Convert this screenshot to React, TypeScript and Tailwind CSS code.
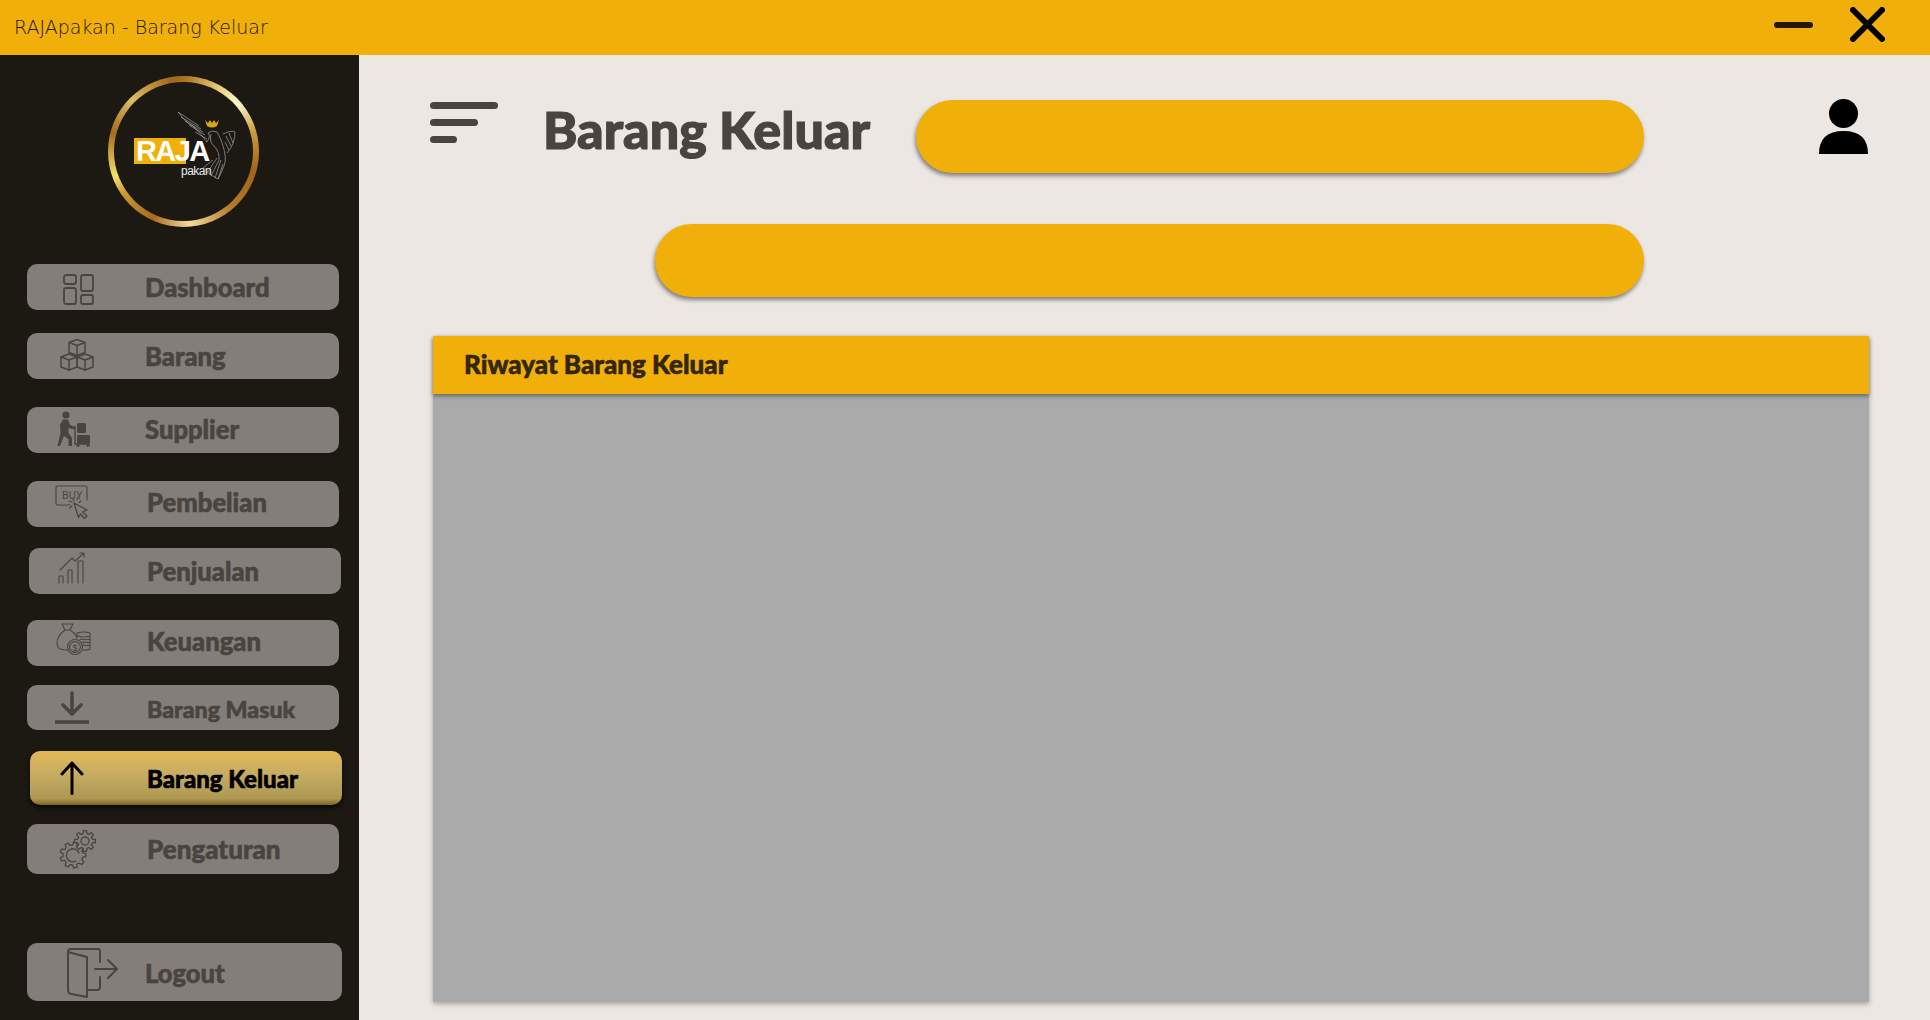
import React from "react";

const gear = (cx: number, cy: number, r: number, teeth: number) => {
  const tip = r + 3;
  let d = "";
  for (let i = 0; i < teeth; i++) {
    const step = (Math.PI * 2) / teeth;
    const a = i * step;
    const pts = [
      [r, a - step * 0.32],
      [tip, a - step * 0.18],
      [tip, a + step * 0.18],
      [r, a + step * 0.32],
    ];
    pts.forEach(([rad, ang], j) => {
      const x = (cx + rad * Math.cos(ang)).toFixed(1);
      const y = (cy + rad * Math.sin(ang)).toFixed(1);
      d += `${i === 0 && j === 0 ? "M" : "L"}${x} ${y}`;
    });
  }
  return d + "Z";
};

const line = { fill: "none", stroke: "#4a4440", strokeLinecap: "round", strokeLinejoin: "round" } as const;

const DashboardIcon = () => (
  <svg width="31" height="31" viewBox="0 0 31 31" {...line} strokeWidth="1.8">
    <rect x="1" y="1" width="12" height="9" rx="2" />
    <rect x="18" y="1" width="12" height="16" rx="2" />
    <rect x="1" y="14" width="12" height="16" rx="2" />
    <rect x="18" y="21" width="12" height="9" rx="2" />
  </svg>
);

const Cube = ({ x, y }: { x: number; y: number }) => (
  <g transform={`translate(${x} ${y})`}>
    <path d="M8 0 L16 3 V13 L8 16 L0 13 V3 Z" />
    <path d="M0 3 L8 6 L16 3 M8 6 V16" />
  </g>
);

const BoxesIcon = () => (
  <svg width="34" height="32" viewBox="0 0 34 32" {...line} strokeWidth="1.5">
    <Cube x={9} y={0.5} />
    <Cube x={1} y={15} />
    <Cube x={17} y={15} />
  </svg>
);

const SupplierIcon = () => (
  <svg width="34" height="36" viewBox="0 0 34 36" fill="#4a4440">
    <circle cx="9" cy="4" r="3.6" />
    <path d="M6 8.5 H11 L13 14 L18 16 V18.5 L11.5 17 V22 L15 27 V35 H11.5 V28.5 L7 25 L3 35 H0.5 L3.5 22 L3 14 Z" />
    <path d="M18 15 V33 H33" fill="none" stroke="#4a4440" strokeWidth="1.4" />
    <rect x="20" y="12" width="9" height="10" rx="1.5" />
    <rect x="20" y="24" width="13" height="9" rx="1" />
    <circle cx="21" cy="34.5" r="1.5" />
    <circle cx="31" cy="34.5" r="1.5" />
  </svg>
);

const BuyIcon = () => (
  <svg width="34" height="34" viewBox="0 0 34 34" {...line} strokeWidth="1.1">
    <path d="M15 20 H2.5 Q1 20 1 18.5 V2.5 Q1 1 2.5 1 H30 Q32 1 32 2.5 V15" />
    <text x="7" y="14" fill="#4a4440" stroke="none" fontSize="10" fontFamily="'Liberation Sans', sans-serif">BUY</text>
    <path d="M19 18 L32 25 L27.5 27 L32 31 L29.5 33.5 L25.5 29 L23.5 32.5 Z" strokeWidth="1.3" />
    <path d="M18 13 L19 16 M23 12 L22 15 M14 16 L17 17 M14.5 23 L17 21 M26 16 L24 17.5" />
  </svg>
);

const SalesIcon = () => (
  <svg width="28" height="32" viewBox="0 0 28 32" {...line} strokeWidth="1.1">
    <path d="M1 31 V25 Q1 24 2 24 H5 V31 M10 31 V18 H14 V31 M20 31 V9 H25 V31" />
    <path d="M2 18 L14 6 L17 9 L26 1 M22 1 H26 V5" />
  </svg>
);

const MoneyIcon = () => (
  <svg width="35" height="33" viewBox="0 0 35 33" {...line} strokeWidth="1.1">
    <path d="M6 1 H17 L14 7 H9 Z M9 7 Q1 13 1 20 Q1 27 9 27 H13 M14 7 Q19 10 21 15" />
    <circle cx="19" cy="24" r="7.5" />
    <circle cx="19" cy="24" r="5.4" />
    <text x="16.5" y="27.5" fill="#4a4440" stroke="none" fontSize="9" fontFamily="'Liberation Sans', sans-serif">$</text>
    <path d="M21 10 Q28 8 34 10 V26 Q31 27.5 27 27 M21 10 V14 M22 13 Q28 15 34 13 M24 16 Q29 17.5 34 16 M26 19 Q30 20 34 19 M27 22 Q31 23 34 22" />
  </svg>
);

const DownIcon = () => (
  <svg width="34" height="33" viewBox="0 0 34 33" fill="none" stroke="#4a4440" strokeWidth="3.6">
    <path d="M17 2 V22" strokeLinecap="round" />
    <path d="M8 14 L17 23 L26 14" strokeLinecap="round" strokeLinejoin="round" />
    <path d="M0 31 H34" />
  </svg>
);

const UpIcon = () => (
  <svg width="24" height="34" viewBox="0 0 24 34" fill="none" stroke="#000" strokeWidth="3" strokeLinecap="round" strokeLinejoin="round">
    <path d="M12 32.5 V2 M2 13 L12 2 L22 13" />
  </svg>
);

const GearsIcon = () => (
  <svg width="38" height="39" viewBox="0 0 38 39" {...line} strokeWidth="1.3">
    <path d={gear(14, 25, 10, 9)} />
    <path d="M20 23 A6.5 6.5 0 1 0 17 31" />
    <path d={gear(26, 11, 7.5, 8)} fill="#837e79" />
    <circle cx="26" cy="11" r="4" />
  </svg>
);

const DoorIcon = () => (
  <svg width="52" height="50" viewBox="0 0 52 50" {...line} strokeWidth="2">
    <path d="M1 4 L20 9 V49 L4 46 Q1 45 1 42 V4 Q1 1 4 1 H31 Q33 1 33 3 V14 M33 29 V39 Q33 42 30 42 H20" />
    <path d="M28 21 H50 M41 12 L50 21 L41 30" />
  </svg>
);

const items = [
  { label: "Dashboard", box: "mt-[37px] ml-[27px] h-[46px]", iconBox: "w-[118px] pl-[36px] pt-[10px]", text: "text-[25.6px] mt-[2px]", Icon: DashboardIcon },
  { label: "Barang", box: "mt-[23px] ml-[27px] h-[46px]", iconBox: "w-[118px] pl-[33px] pt-[6px]", text: "text-[25.6px] mt-[2px]", Icon: BoxesIcon },
  { label: "Supplier", box: "mt-[28px] ml-[27px] h-[46px]", iconBox: "w-[118px] pl-[30px] pt-[4px]", text: "text-[25.6px]", Icon: SupplierIcon },
  { label: "Pembelian", box: "mt-[28px] ml-[27px] h-[46px]", iconBox: "w-[120px] pl-[28px] pt-[4px]", text: "text-[25.6px] mb-[2px]", Icon: BuyIcon },
  { label: "Penjualan", box: "mt-[21px] ml-[29px] h-[46px]", iconBox: "w-[118px] pl-[29px] pt-[4px]", text: "text-[25.6px] mt-[2px]", Icon: SalesIcon },
  { label: "Keuangan", box: "mt-[26px] ml-[27px] h-[46px]", iconBox: "w-[120px] pl-[29px] pt-[3px]", text: "text-[25.6px] mb-[2px]", Icon: MoneyIcon },
  { label: "Barang Masuk", box: "mt-[19px] ml-[27px] h-[45px]", iconBox: "w-[120px] pl-[28px] pt-[6px]", text: "text-[23.2px] mt-[4px]", Icon: DownIcon },
];

const NavButton = ({ label, box, iconBox, text, Icon }: (typeof items)[number]) => (
  <div className={`${box} w-[312px] flex rounded-[10px] bg-[#837e79]`}>
    <div className={`${iconBox} shrink-0`}>
      <Icon />
    </div>
    <span className={`${text} self-center font-black leading-none text-[#4a4440] [-webkit-text-stroke:0.6px]`}>{label}</span>
  </div>
);

const Logo = () => (
  <div className="relative mt-[21px] ml-[108px] h-[151px] w-[151px] rounded-full bg-[conic-gradient(#a86f1f_0deg,#e9cf78_30deg,#fff8cf_48deg,#c99a3c_75deg,#a2631a_105deg,#b57a28_140deg,#f2dc98_175deg,#a86a1c_205deg,#c89a35_235deg,#f2e36a_250deg,#a66c1e_285deg,#dcbd62_315deg,#a2681c_350deg,#a86f1f_360deg)] p-[6px]">
    <div className="h-full w-full rounded-full bg-[#1c1913]" />
    <div className="absolute left-[26px] top-[62px] h-[26px] w-[52px] bg-[#f1b009]" />
    <span className="absolute left-[28px] top-[60px] font-['Liberation_Sans',sans-serif] text-[29px] leading-[30px] font-bold tracking-[-1.6px] text-white">RAJA</span>
    <span className="absolute left-[73px] top-[88px] font-['Liberation_Sans',sans-serif] text-[12px] leading-[14px] tracking-[-0.5px] text-[#e8e8e8]">pakan</span>
    <svg className="absolute left-0 top-0" width="151" height="151" viewBox="1 0 151 151" fill="none" stroke="#b9b9b9" strokeWidth="0.6">
      <path d="M71 36 Q80 48 86 50 Q94 58 100 66 Q104 60 101 57 L105 55 L110 56 Q114 62 116 70 Q120 82 117 90 Q114 98 111 103 L104 99 L96 92" />
      <path d="M71 36 L92 50 M74 41 L94 53 M78 45 L96 56 M82 49 L98 59 M88 56 L100 63" />
      <path d="M116 58 Q124 54 128 56 Q128 68 120 77 M119 60 L124 70 M122 57 L126 67 M118 66 L122 74" />
      <path d="M96 92 L106 84 M100 97 L110 82 M104 100 L112 84 M108 102 L114 84 M111 103 L116 88" />
      <path d="M104 58 Q102 66 107 70 Q113 76 112 84" />
    </svg>
    <svg className="absolute left-[96px] top-[43px]" width="16" height="10" viewBox="0 0 16 10" fill="#d9a60f">
      <path d="M1 1 L4 4 L6 1 L8 4 L10 1 L12 4 L15 1 L13 7 Q8 10 3 7 Z" />
    </svg>
  </div>
);

export default function App() {
  return (
    <div className="flex h-screen flex-col overflow-hidden font-['Lato',sans-serif]">
      <header className="flex h-[55px] shrink-0 items-center justify-between bg-[#f1b009] pl-[14px] pr-[45px]">
        <span className="font-['DejaVu_Sans',sans-serif] text-[19px] font-extralight text-[#1f1700]">RAJApakan - Barang Keluar</span>
        <div className="flex items-center gap-[37px]">
          <div className="-mt-[6px] h-[6px] w-[39px] rounded-full bg-[#221a05]" />
          <svg className="-mt-[6px]" width="35" height="35" viewBox="0 0 35 35" stroke="#000" strokeWidth="6" strokeLinecap="round">
            <path d="M3 3 L32 32 M32 3 L3 32" />
          </svg>
        </div>
      </header>

      <div className="flex min-h-0 flex-1">
        <aside className="flex w-[359px] shrink-0 flex-col bg-[#1c1913]">
          <Logo />
          {items.map((item) => (
            <NavButton key={item.label} {...item} />
          ))}

          <div className="mt-[21px] ml-[30px] flex h-[54px] w-[312px] rounded-[10px] bg-[linear-gradient(#e3b855_0%,#c8ad63_40%,#ae9852_88%,#7d6424_100%)] shadow-[0_3px_5px_rgba(0,0,0,0.7)]">
            <div className="w-[117px] shrink-0 pl-[30px] pt-[10px]">
              <UpIcon />
            </div>
            <span className="mt-[2px] self-center text-[24px] font-black leading-none text-black [-webkit-text-stroke:0.6px]">Barang Keluar</span>
          </div>

          <div className="mt-[19px] ml-[27px] flex h-[50px] w-[312px] rounded-[10px] bg-[#837e79]">
            <div className="w-[120px] shrink-0 pl-[32px] pt-[6px]">
              <GearsIcon />
            </div>
            <span className="self-center text-[26px] font-black leading-none text-[#4a4440] [-webkit-text-stroke:0.6px]">Pengaturan</span>
          </div>

          <div className="mt-[69px] ml-[27px] flex h-[58px] w-[315px] rounded-[10px] bg-[#837e79]">
            <div className="w-[118px] shrink-0 pl-[40px] pt-[5px]">
              <DoorIcon />
            </div>
            <span className="mt-[4px] self-center text-[25.6px] font-black leading-none text-[#4a4440] [-webkit-text-stroke:0.6px]">Logout</span>
          </div>
        </aside>

        <main className="min-w-0 flex-1 bg-[#ece7e3] pl-[74px] pr-[61px]">
          <div className="flex h-[169px] items-start">
            <div className="-ml-[3px] mt-[47px] flex w-[68px] flex-col gap-[10px]">
              <div className="h-[7px] w-[68px] rounded-full bg-[#4a4440]" />
              <div className="h-[7px] w-[48px] rounded-full bg-[#4a4440]" />
              <div className="h-[7px] w-[27px] rounded-full bg-[#4a4440]" />
            </div>
            <h1 className="ml-[45px] mt-[44px] w-[373px] text-[52px] font-black leading-[60px] text-[#4a4440] [-webkit-text-stroke:1.2px]">Barang Keluar</h1>
            <div className="mt-[45px] h-[73px] w-[728px] rounded-full bg-[#f1b009] shadow-[-1px_3px_4px_rgba(0,0,0,0.45)]" />
            <svg className="ml-[175px] mt-[44px]" width="49" height="56" viewBox="0 0 49 56" fill="#000">
              <circle cx="24.5" cy="14.5" r="14.5" />
              <path d="M0 55 Q0 32 24.5 32 Q49 32 49 55 Z" />
            </svg>
          </div>

          <div className="flex justify-end pr-[225px]">
            <div className="h-[73px] w-[989px] rounded-full bg-[#f1b009] shadow-[-1px_3px_4px_rgba(0,0,0,0.45)]" />
          </div>

          <section className="mt-[39px] h-[666px] bg-[#aaaaaa] shadow-[0_2px_5px_rgba(0,0,0,0.3)]">
            <div className="flex h-[58px] items-center bg-[#f1b009] pl-[31px] shadow-[0_2px_4px_rgba(0,0,0,0.4)]">
              <h2 className="mb-[2px] text-[26px] font-black leading-none text-[#33260a] [-webkit-text-stroke:0.6px]">Riwayat Barang Keluar</h2>
            </div>
          </section>
        </main>
      </div>
    </div>
  );
}
